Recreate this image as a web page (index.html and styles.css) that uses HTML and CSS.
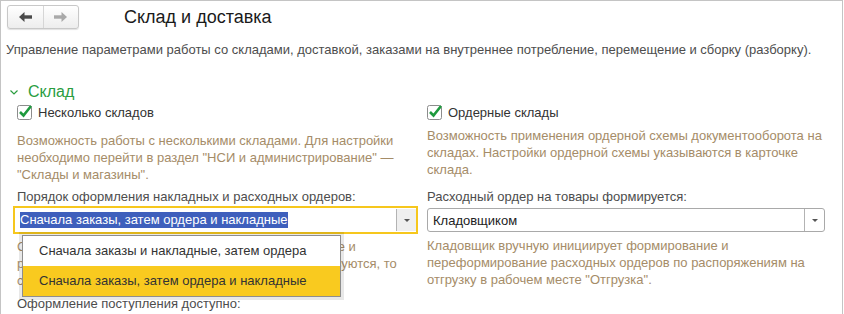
FILE: index.html
```html
<!DOCTYPE html>
<html lang="ru">
<head>
  <meta charset="UTF-8">
  <title>Склад и доставка</title>
  <link rel="stylesheet" href="styles.css">
</head>
<body>
  <div class="frame">
    <div class="header">
      <div class="nav">
        <div class="nav-btn">
          <svg width="13" height="10" viewBox="0 0 13 10"><polygon points="0,5 5.5,0 5.5,10" fill="#4a4a4a"/><rect x="5" y="3.3" width="8" height="3.4" fill="#4a4a4a"/></svg>
        </div>
        <div class="nav-btn">
          <svg width="13" height="10" viewBox="0 0 13 10"><polygon points="13,5 7.5,0 7.5,10" fill="#a9a9a9"/><rect x="0" y="3.3" width="8" height="3.4" fill="#a9a9a9"/></svg>
        </div>
      </div>
      <div class="title">Склад и доставка</div>
    </div>

    <div class="intro">Управление параметрами работы со складами, доставкой, заказами на внутреннее потребление, перемещение и сборку (разборку).</div>

    <div class="group-title">
      <svg class="chevron" width="8" height="5" viewBox="0 0 8 5"><polyline points="0.5,0.5 4,4 7.5,0.5" fill="none" stroke="#2a9d3f" stroke-width="1.2"/></svg>
      <span>Склад</span>
    </div>

    <div class="columns">
      <div class="col">
        <label class="check">
          <svg class="box" width="16" height="16" viewBox="0 0 16 16"><rect x="0.5" y="1.5" width="14" height="14" rx="2" fill="#fff" stroke="#8c8c8c"/><polyline points="3,8 6.5,11.5 14,2" fill="none" stroke="#1e9a3e" stroke-width="2.6"/></svg>
          Несколько складов
        </label>
        <div class="hint hint-left">Возможность работы с несколькими складами. Для настройки необходимо перейти в раздел "НСИ и администрирование" — "Склады и магазины".</div>
        <div class="field-label">Порядок оформления накладных и расходных ордеров:</div>
        <div class="select select-focus">
          <div class="select-value"><span class="selected-text">Сначала заказы, затем ордера и накладные</span></div>
          <div class="select-btn"><span class="arrow"></span></div>
          <div class="popup">
            <div class="popup-item">Сначала заказы и накладные, затем ордера</div>
            <div class="popup-item active">Сначала заказы, затем ордера и накладные</div>
          </div>
        </div>
        <div class="hint under">Сначала оформляются все заказы, а затем складские и<br>распоряжения. Если же ордерные склады не используются, то<br>сначала оформляются накладные.</div>
        <div class="field-label next">Оформление поступления доступно:</div>
      </div>

      <div class="col">
        <label class="check">
          <svg class="box" width="16" height="16" viewBox="0 0 16 16"><rect x="0.5" y="1.5" width="14" height="14" rx="2" fill="#fff" stroke="#8c8c8c"/><polyline points="3,8 6.5,11.5 14,2" fill="none" stroke="#1e9a3e" stroke-width="2.6"/></svg>
          Ордерные склады
        </label>
        <div class="hint hint-right">Возможность применения ордерной схемы документооборота на складах. Настройки ордерной схемы указываются в карточке склада.</div>
        <div class="field-label">Расходный ордер на товары формируется:</div>
        <div class="select select-plain">
          <div class="select-value">Кладовщиком</div>
          <div class="select-btn"><span class="arrow"></span></div>
        </div>
        <div class="hint under-right">Кладовщик вручную инициирует формирование и переформирование расходных ордеров по распоряжениям на отгрузку в рабочем месте "Отгрузка".</div>
      </div>
    </div>
  </div>
</body>
</html>
```

FILE: styles.css
```css
body {
  margin: 0;
  background: #fff;
  font-family: "Liberation Sans", Arial, sans-serif;
  font-size: 13px;
  color: #4d4d4d;
  overflow: hidden;
}

.frame {
  width: 843px;
  height: 314px;
  box-sizing: border-box;
  border: 1px solid #c4c4c4;
  border-bottom: none;
  overflow: hidden;
}

/* Header with back / forward */
.header {
  display: flex;
  align-items: center;
  padding: 4px 0 0 6px;
  height: 24px;
}

.nav {
  display: flex;
  width: 72px;
  height: 24px;
  box-sizing: border-box;
  border: 1px solid #c8c8c8;
  border-radius: 3px;
  background: linear-gradient(#ffffff, #ededed);
  box-shadow: 0 1px 1px rgba(0, 0, 0, 0.12);
}

.nav-btn {
  flex: 1;
  display: flex;
  align-items: center;
  justify-content: center;
}

.nav-btn + .nav-btn {
  border-left: 1px solid #d6d6d6;
}

.title {
  margin-left: 45px;
  font-size: 18px;
  color: #1a1a1a;
}

.intro {
  margin-top: 13px;
  padding-left: 5px;
  line-height: 16px;
}

.group-title {
  display: flex;
  align-items: center;
  margin-top: 24px;
  padding-left: 9px;
  height: 20px;
  font-size: 16px;
  color: #2a9d3f;
}

.chevron {
  margin-right: 10px;
}

/* Two columns of settings */
.columns {
  display: grid;
  grid-template-columns: 401px 398px;
  column-gap: 9px;
  padding-left: 16px;
  margin-top: 2px;
}

.col {
  display: flex;
  flex-direction: column;
}

.check {
  display: flex;
  align-items: center;
  height: 16px;
  color: #333;
}

.box {
  margin-right: 5px;
}

.hint {
  color: #a58c68;
  line-height: 17px;
}

.hint-left {
  margin-top: 12px;
  padding-right: 12px;
}

.hint-right {
  margin-top: 7px;
}

.field-label {
  margin-top: 6px;
  line-height: 16px;
}

.col:last-child .field-label {
  margin-top: 11px;
}

.field-label.next {
  margin-top: 7px;
}

/* Select fields */
.select {
  position: relative;
  display: flex;
  box-sizing: border-box;
  background: #fff;
}

.select-focus {
  margin: 1px 0 0 -4px;
  width: 405px;
  height: 28px;
  border: 2px solid #f6c71d;
}

.select-plain {
  margin-top: 3px;
  width: 398px;
  height: 24px;
  border: 1px solid #a9a9a9;
  border-radius: 3px;
}

.select-value {
  flex: 1;
  display: flex;
  align-items: center;
  padding-left: 5px;
  color: #222;
}

.selected-text {
  background: #3e5fbc;
  color: #fff;
  line-height: 16px;
}

.select-btn {
  width: 19px;
  display: flex;
  align-items: center;
  justify-content: center;
  border-left: 1px solid #b3b3b3;
}

.select-focus .select-btn {
  background: #efefef;
  margin: 1px 0;
}

.arrow {
  width: 0;
  height: 0;
  border-left: 3px solid transparent;
  border-right: 3px solid transparent;
  border-top: 3px solid #555;
}

.popup {
  position: absolute;
  left: 7px;
  top: 27px;
  width: 319px;
  box-sizing: border-box;
  border: 1px solid #8e8e8e;
  background: #fff;
  box-shadow: 0 0 0 3px rgba(0, 0, 0, 0.09);
  z-index: 2;
}

.popup-item {
  height: 30px;
  line-height: 30px;
  padding-left: 16px;
  color: #333;
}

.popup-item.active {
  background: #f9ca1f;
}

.under {
  margin-top: 4px;
  white-space: nowrap;
}

.under-right {
  margin-top: 5px;
}
```
